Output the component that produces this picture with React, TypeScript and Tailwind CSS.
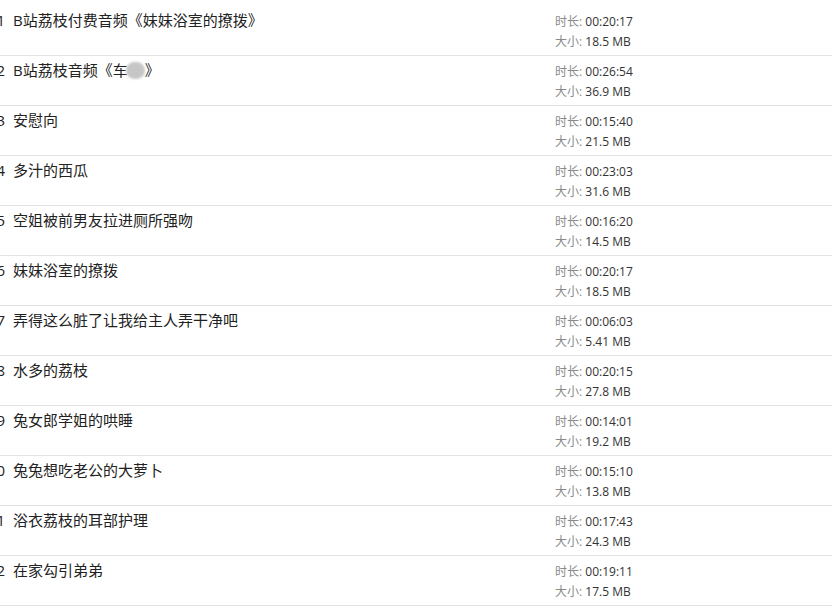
const tracks = [
  { n: 1, title: 'B站荔枝付费音频《妹妹浴室的撩拨》', time: '00:20:17', size: '18.5 MB' },
  { n: 2, title: 'B站荔枝音频《车', masked: true, time: '00:26:54', size: '36.9 MB' },
  { n: 3, title: '安慰向', time: '00:15:40', size: '21.5 MB' },
  { n: 4, title: '多汁的西瓜', time: '00:23:03', size: '31.6 MB' },
  { n: 5, title: '空姐被前男友拉进厕所强吻', time: '00:16:20', size: '14.5 MB' },
  { n: 6, title: '妹妹浴室的撩拨', time: '00:20:17', size: '18.5 MB' },
  { n: 7, title: '弄得这么脏了让我给主人弄干净吧', time: '00:06:03', size: '5.41 MB' },
  { n: 8, title: '水多的荔枝', time: '00:20:15', size: '27.8 MB' },
  { n: 9, title: '兔女郎学姐的哄睡', time: '00:14:01', size: '19.2 MB' },
  { n: 10, title: '兔兔想吃老公的大萝卜', time: '00:15:10', size: '13.8 MB' },
  { n: 11, title: '浴衣荔枝的耳部护理', time: '00:17:43', size: '24.3 MB' },
  { n: 12, title: '在家勾引弟弟', time: '00:19:11', size: '17.5 MB' },
]

const App = () => {
  return (
    <div className="w-[832px] h-[606px] overflow-hidden bg-white pt-[6px] font-['Open_Sans','Noto_Sans_CJK_SC',sans-serif]">
      {tracks.map((t) => (
        <div key={t.n} className="flex h-[50px] border-b border-[#e3e3e3]">
          {/* title column, number is clipped on the left */}
          <div className="flex-1 flex pt-[4px] text-[15px] leading-[20px] text-[#222]">
            <span className="w-[24px] -ml-[19px] text-right shrink-0">{t.n}</span>
            <span className="ml-[8px] whitespace-nowrap">
              {t.title}
              {t.masked && (
                <>
                  <span className="inline-block w-[19px] h-[17px] -ml-[2px] rounded-full bg-[#c6c6c6] blur-[1px] align-[-3px]" />
                  》
                </>
              )}
            </span>
          </div>
          {/* meta */}
          <div className="w-[277px] pt-[6px] text-[12px] leading-[20px]">
            <div>
              <span className="text-[#8a8a8a]">时长: </span>
              <span className="text-[#333]">{t.time}</span>
            </div>
            <div>
              <span className="text-[#8a8a8a]">大小: </span>
              <span className="text-[#333]">{t.size}</span>
            </div>
          </div>
        </div>
      ))}
    </div>
  )
}

export default App
